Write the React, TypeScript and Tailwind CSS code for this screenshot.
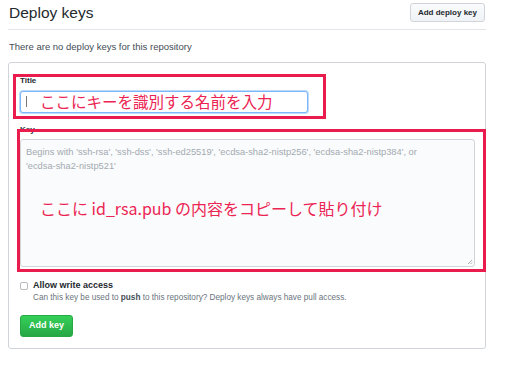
import React from 'react';

const jp = { fontFamily: '"Noto Sans CJK JP", "Noto Sans", sans-serif' };

const App: React.FC = () => {
  return (
    <div
      className="w-[512px] h-[370px] bg-white pl-[8px] text-[#24292e]"
      style={{ fontFamily: '"Liberation Sans", Arial, sans-serif' }}
    >
      <div className="w-[478px]">
        {/* header */}
        <div className="flex items-center justify-between h-[30px] border-b border-[#e1e4e8] pl-[1px]">
          <h2 className="text-[15.5px] leading-none -mt-[4px]">Deploy keys</h2>
          <button className="h-[19px] px-[7px] -mt-[4px] mr-[1px] rounded-[3px] border border-[#d1d5da] bg-gradient-to-b from-[#fafbfc] to-[#eff3f6] text-[8px] font-bold leading-none">
            Add deploy key
          </button>
        </div>

        <p className="text-[9.5px] text-[#444d56] mt-[12px] pl-[1px] leading-none">
          There are no deploy keys for this repository
        </p>

        {/* form card */}
        <div className="relative mt-[10px] h-[287px] border border-[#d1d5da] rounded-[3px] px-[11px] pt-[12px]">
          <label className="block text-[8px] font-bold leading-none mt-[2px]">Title</label>
          <div className="mt-[6px] w-[288px] h-[22px] rounded-[3px] border border-[#79b8ff] shadow-[0_0_0_1px_rgba(3,102,214,0.25)] bg-white flex items-center">
            <span className="ml-[5px] w-px h-[11px] bg-[#777]" />
            <span className="ml-[13px] text-[15.5px] text-[#ec2453] leading-none" style={jp}>
              ここにキーを識別する名前を入力
            </span>
          </div>

          <label className="block text-[8px] font-bold leading-none mt-[13px]">Key</label>
          <div className="relative mt-[5px] w-[455px] h-[128px] rounded-[3px] border border-[#d1d5da] bg-[#fafbfc] px-[5px] pt-[5px]">
            <p className="text-[9.3px] leading-[14px] text-[#a3aab1]">
              Begins with 'ssh-rsa', 'ssh-dss', 'ssh-ed25519', 'ecdsa-sha2-nistp256', 'ecdsa-sha2-nistp384', or
              <br />
              'ecdsa-sha2-nistp521'
            </p>
            <p className="mt-[27px] ml-[14px] text-[16px] text-[#ec2453] leading-none" style={jp}>
              ここに id_rsa.pub の内容をコピーして貼り付け
            </p>
            <svg className="absolute right-[1px] bottom-[1px]" width="6" height="6" viewBox="0 0 6 6">
              <path d="M1 5 L5 1 M3.5 5 L5 3.5" stroke="#999" strokeWidth="0.8" />
            </svg>
          </div>

          <div className="flex mt-[14px]">
            <span className="mt-[1px] w-[8px] h-[8px] rounded-[2px] border border-[#b8bcc0] bg-white" />
            <div className="ml-[5px]">
              <p className="text-[9px] font-bold leading-none">Allow write access</p>
              <p className="text-[8.2px] text-[#6a737d] leading-none mt-[4px]">
                Can this key be used to <b className="text-[#444d56]">push</b> to this repository? Deploy keys always have pull access.
              </p>
            </div>
          </div>

          <button className="mt-[13px] w-[53px] h-[22px] rounded-[3px] border border-[#28a745] bg-gradient-to-b from-[#34d058] to-[#28a745] text-white text-[9px] font-bold leading-none">
            Add key
          </button>

          {/* annotation boxes */}
          <div className="absolute left-[4px] top-[11px] w-[313px] h-[45px] border-[3px] border-[#ea1c4e]" />
          <div className="absolute left-[8px] top-[66px] w-[469px] h-[143px] border-[3px] border-[#ea1c4e]" />
        </div>
      </div>
    </div>
  );
};

export default App;
